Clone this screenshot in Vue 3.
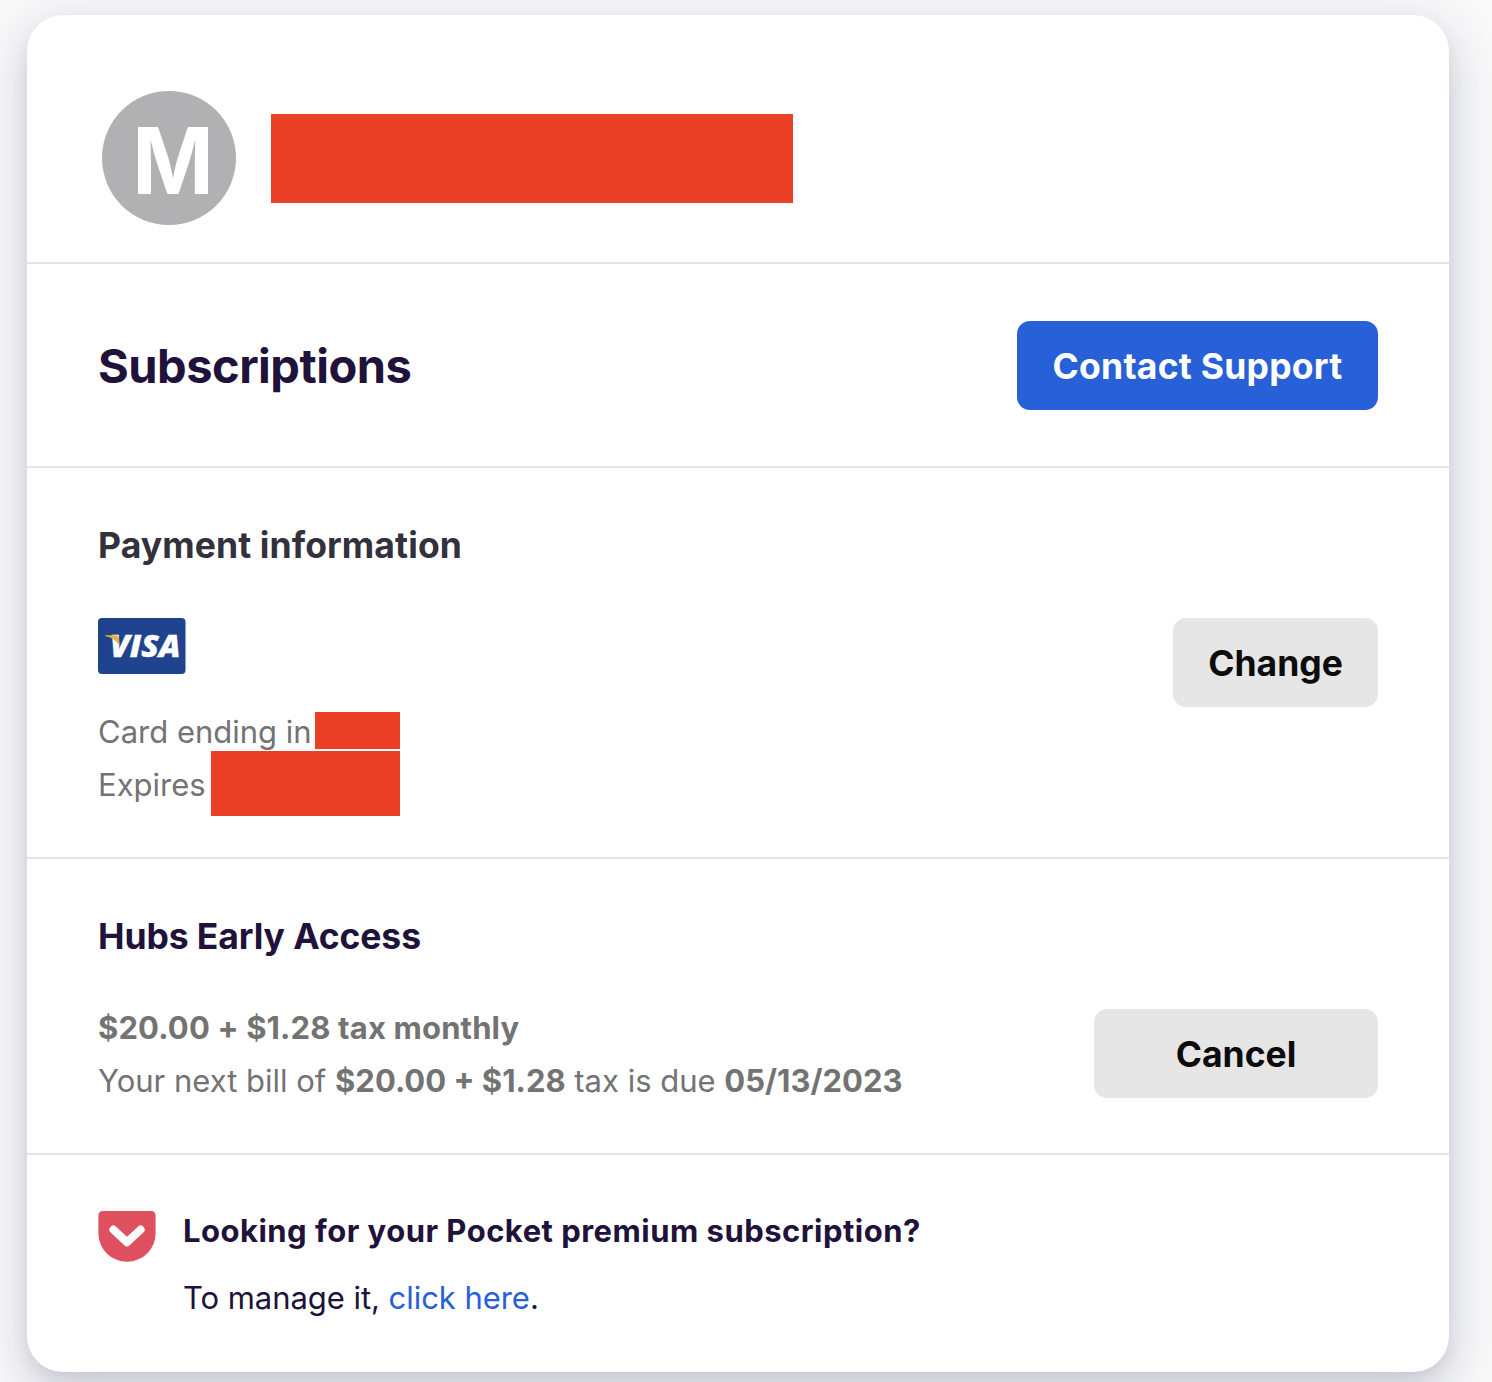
<script setup>
const price = '$20.00 + $1.28'
</script>

<template>
  <div class="page">
    <main class="card">
      <header class="profile">
        <div class="avatar"><span>M</span></div>
        <div class="redacted name"></div>
      </header>

      <section class="heading">
        <h2>Subscriptions</h2>
        <button class="btn primary">Contact Support</button>
      </section>

      <section class="payment">
        <h3>Payment information</h3>
        <div class="row">
          <div class="details">
            <svg class="visa" viewBox="0 0 88 56" role="img" aria-label="Visa">
              <rect width="87.5" height="56" rx="4" fill="#20438f" />
              <text x="12" y="38.8" textLength="70.5" lengthAdjust="spacingAndGlyphs">VISA</text>
              <path d="M7 17.2 H17.5 Q20.2 17.2 20.7 20 L21.7 28 Q17 19.5 7 17.9 Z" fill="#e9b040" />
            </svg>
            <div class="line first">
              <span>Card ending in</span>
              <i class="redacted digits"></i>
            </div>
            <div class="line">
              <span>Expires</span>
              <i class="redacted expiry"></i>
            </div>
          </div>
          <button class="btn change">Change</button>
        </div>
      </section>

      <section class="plan">
        <h3>Hubs Early Access</h3>
        <div class="row">
          <div class="billing">
            <p class="amount"><b>{{ price }} tax monthly</b></p>
            <p>Your next bill of <b>{{ price }}</b> tax is due <b>05/13/2023</b></p>
          </div>
          <button class="btn cancel">Cancel</button>
        </div>
      </section>

      <section class="pocket">
        <svg class="pocket-icon" viewBox="0 0 58 51" aria-hidden="true">
          <path d="M5 0H53Q57.6 0 57.6 4.8V22.2A28.6 28.6 0 0 1 .4 22.2V4.8Q.4 0 5 0Z" fill="#de505e" />
          <path d="M15.4 18.6 29 31.2 42.6 18.6" fill="none" stroke="#fff" stroke-width="8" stroke-linecap="round" stroke-linejoin="round" />
        </svg>
        <div class="pocket-text">
          <p class="question"><b>Looking for your Pocket premium subscription?</b></p>
          <p class="manage">To manage it, <a>click here</a>.</p>
        </div>
      </section>
    </main>
  </div>
</template>

<style>
body {
  margin: 0;
}
</style>

<style scoped>
.page {
  box-sizing: border-box;
  height: 1382px;
  padding: 15px 43px 0 27px;
  overflow: hidden;
  background: #f9f9fa;
  font-family: Inter, "Liberation Sans", sans-serif;
  font-size: 31px;
  color: #20123a;
}
.card {
  height: 1357px;
  border-radius: 36px;
  background: #fff;
  box-shadow:
    0 26px 40px 4px rgba(34, 0, 51, 0.04),
    0 13px 48px 9px rgba(20, 30, 90, 0.11),
    0 9px 22px -6px rgba(14, 13, 26, 0.13);
}
.profile,
.heading,
.payment,
.plan {
  box-sizing: border-box;
  border-bottom: 2px solid #e5e5e6;
  padding: 0 71px;
}
h2,
h3,
p {
  margin: 0;
  white-space: nowrap;
}
b {
  font-weight: 700;
}
span {
  white-space: nowrap;
}
.redacted {
  display: block;
  flex: none;
  background: #eb4026;
}
.profile {
  display: flex;
  align-items: flex-start;
  gap: 35px;
  height: 249px;
  padding: 76px 75px 0;
}
.avatar {
  display: flex;
  justify-content: center;
  width: 134px;
  height: 134px;
  border-radius: 50%;
  background: #b1b1b3;
  color: #fff;
  font-size: 92px;
  font-weight: 750;
  line-height: 140px;
  padding-left: 7px;
  box-sizing: border-box;
}
.avatar span {
  transform: scaleX(0.95);
}
.name {
  width: 522px;
  height: 89px;
  margin-top: 23px;
}
.heading {
  display: flex;
  justify-content: space-between;
  align-items: center;
  height: 204px;
}
h2 {
  font-size: 47px;
  font-weight: 700;
  line-height: 60px;
  letter-spacing: -0.5px;
  padding-top: 2px;
}
h3 {
  font-size: 35.5px;
  font-weight: 650;
  line-height: 48px;
}
.btn {
  height: 89px;
  padding: 2px 0 0;
  border: 0;
  border-radius: 13px;
  background: #e6e6e6;
  color: #0c0c0d;
  font: 650 35.5px/87px Inter, "Liberation Sans", sans-serif;
  text-align: center;
  white-space: nowrap;
}
.primary {
  width: 361px;
  background: #2860d8;
  color: #fff;
  letter-spacing: 0.25px;
}
.change {
  width: 205px;
}
.cancel {
  width: 284px;
}
.row {
  display: flex;
  justify-content: space-between;
  align-items: flex-start;
}
.payment {
  height: 391px;
  padding-top: 54px;
}
.payment h3 {
  color: #32313c;
  letter-spacing: 0.1px;
}
.payment .row,
.plan .row {
  margin-top: 48px;
}
.details {
  color: #737373;
}
.visa {
  display: block;
  width: 88px;
  height: 56px;
}
.visa text {
  fill: #fff;
  stroke: #fff;
  stroke-width: 0.4px;
  font: italic 800 30px "Open Sans", sans-serif;
}
.line {
  display: flex;
  line-height: 53px;
  justify-content: space-between;
  width: 302px;
  height: 53px;
}
.first {
  margin-top: 31px;
}
.digits {
  width: 85px;
  height: 37px;
  margin-top: 7px;
}
.expiry {
  width: 189px;
  height: 65px;
  margin-top: -7px;
}
.plan {
  height: 296px;
  padding-top: 54px;
}
.plan h3 {
  letter-spacing: -0.1px;
}
.billing {
  margin-top: -8px;
  color: #737373;
  line-height: 53px;
}
.amount {
  letter-spacing: 0.15px;
}
.pocket {
  display: flex;
  gap: 27px;
  padding: 56px 71px 0;
}
.pocket-icon {
  width: 58px;
  height: 51px;
}
.pocket-text {
  line-height: 40px;
}
.question {
  letter-spacing: 0.48px;
}
.manage {
  margin-top: 27px;
  letter-spacing: -0.05px;
}
a {
  color: #2860d8;
}
</style>
